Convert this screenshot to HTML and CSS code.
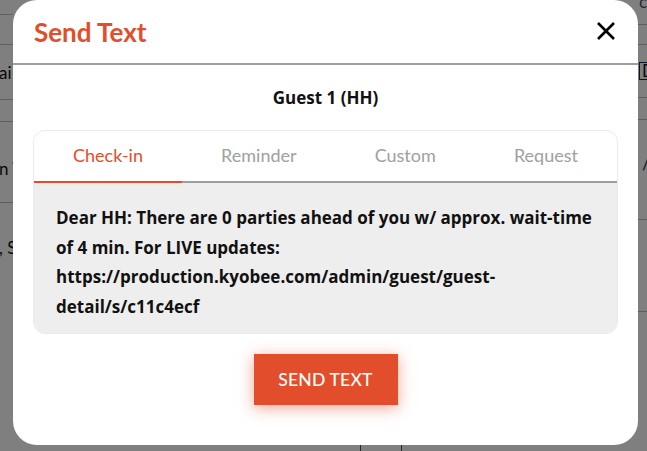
FILE: index.html
```html
<!DOCTYPE html>
<html lang="en">
<head>
<meta charset="utf-8">
<title>Send Text</title>
<link rel="stylesheet" href="styles.css">
</head>
<body>
<div class="bg">
  <div class="bg-col bg-left">
    <div class="row r1"></div>
    <div class="row r2"></div>
    <div class="row r3"><span class="cell-text">ai</span></div>
    <div class="row r4"></div>
    <div class="row r5"><span class="cell-text">n T</span></div>
    <div class="row r6"><span class="cell-text">, S</span></div>
  </div>
  <div class="bg-bottom">
    <div class="bottom-cell"></div>
  </div>
  <div class="bg-col bg-right">
    <div class="row q1"><span class="cell-text faint">ch</span></div>
    <div class="row q2"></div>
    <div class="row q3"><span class="cell-box">D</span></div>
    <div class="row q4"></div>
    <div class="row q5"><span class="cell-text navy">/</span></div>
    <div class="row q6"></div>
    <div class="row q7"></div>
  </div>
</div>

<div class="overlay"></div>

<div class="modal">
  <div class="modal-header">
    <h2 class="modal-title">Send Text</h2>
    <button class="close-btn" aria-label="Close">
      <svg width="20" height="20" viewBox="0 0 20 20"><path d="M2 2 L18 18 M18 2 L2 18" stroke="#000" stroke-width="2.6" stroke-linecap="butt" fill="none"/></svg>
    </button>
  </div>
  <div class="modal-body">
    <div class="guest-name">Guest 1 (HH)</div>
    <div class="card">
      <div class="tabs">
        <div class="tab active">Check-in</div>
        <div class="tab">Reminder</div>
        <div class="tab">Custom</div>
        <div class="tab">Request</div>
      </div>
      <div class="message">Dear HH: There are 0 parties ahead of you w/ approx. wait-time of 4 min. For LIVE updates: https://production.kyobee.com/admin/guest/guest-detail/s/c11c4ecf</div>
    </div>
    <div class="actions">
      <button class="send-btn">SEND TEXT</button>
    </div>
  </div>
</div>
</body>
</html>
```
FILE: styles.css
```css
* { box-sizing: border-box; }
html, body { margin: 0; padding: 0; }
body {
  width: 647px;
  height: 451px;
  overflow: hidden;
  background: #fff;
  font-family: Lato, "Open Sans", "Liberation Sans", sans-serif;
  color: #111;
  position: relative;
}

/* background table */
.bg {
  display: flex;
  justify-content: space-between;
  height: 451px;
  font-size: 17px;
}
.bg-col { width: 13px; overflow: hidden; }
.bg-right { width: 9px; }
.row { border-bottom: 1px solid #bdbdbd; display: flex; align-items: center; white-space: nowrap; }
.r1 { height: 15px; }
.r2 { height: 30px; }
.r3 { height: 55px; }
.r4 { height: 22px; }
.r5 { height: 81px; padding-top: 12px; }
.r6 { height: 90px; border-bottom: none; align-items: flex-start; padding-top: 34px; }
.q1 { height: 25px; align-items: flex-start; }
.q2 { height: 20px; }
.q3 { height: 53px; }
.q4 { height: 22px; }
.q5 { height: 100px; padding-bottom: 12px; }
.q6 { height: 92px; }
.q7 { height: 60px; border-bottom: none; }
.cell-text { margin-left: -1px; }
.faint { color: #555; margin-top: -9px; margin-left: 1px; }
.navy { color: #1b2a5a; margin-left: 4px; }
.cell-box { border: 1px solid #1b2a5a; border-right: none; padding: 0 6px 0 2px; line-height: 16px; margin-left: 1px; }
.bg-bottom { flex: 1; display: flex; align-items: flex-end; justify-content: center; }
.bottom-cell {
  width: 42px;
  height: 6px;
  border-left: 1px solid #555;
  border-right: 1px solid #555;
  margin-left: 110px;
}

.overlay {
  position: absolute;
  inset: 0;
  background: rgba(0, 0, 0, 0.5);
}

/* modal */
.modal {
  position: absolute;
  left: 13px;
  top: 0;
  width: 625px;
  height: 445px;
  background: #fff;
  border-radius: 24px;
  display: flex;
  flex-direction: column;
}
.modal-header {
  height: 65px;
  padding: 0 22px 0 21px;
  display: flex;
  align-items: center;
  justify-content: space-between;
  border-bottom: 2px solid #9e9e9e;
}
.modal-title {
  margin: 0;
  font-size: 26px;
  font-weight: 700;
  color: #e24e2b;
  line-height: 1;
  padding-top: 1px;
}
.close-btn {
  border: none;
  background: none;
  padding: 0;
  width: 20px;
  height: 20px;
  display: flex;
  cursor: pointer;
}
.modal-body {
  padding: 21px 20px 40px 20px;
  display: flex;
  flex-direction: column;
}
.guest-name {
  text-align: center;
  font-family: "Open Sans", Lato, sans-serif;
  font-size: 17px;
  font-weight: 700;
  line-height: 24px;
  color: #111;
}
.card {
  margin-top: 20px;
  border: 1px solid #ebebeb;
  border-radius: 12px;
  overflow: hidden;
}
.tabs {
  display: flex;
  height: 52px;
}
.tab {
  flex: 1 1 auto;
  text-align: center;
  font-size: 18px;
  color: #a0a0a0;
  line-height: 49px;
  border-bottom: 2px solid #9e9e9e;
}
.tab.active {
  color: #e24e2b;
  border-bottom-color: #e24e2b;
}
.message {
  background: #eeeeee;
  padding: 20px 20px 11px 22px;
  font-family: "Open Sans", Lato, sans-serif;
  font-size: 17px;
  font-weight: 700;
  line-height: 29.8px;
  color: #111;
}
.actions {
  display: flex;
  justify-content: center;
  margin-top: 20px;
}
.send-btn {
  width: 144px;
  height: 51px;
  border: none;
  background: #e24e2b;
  color: #fff;
  font-family: inherit;
  font-size: 17.5px;
  font-weight: 500;
  letter-spacing: 0.2px;
  box-shadow: 0 3px 14px rgba(226, 78, 43, 0.5);
  cursor: pointer;
}
```
